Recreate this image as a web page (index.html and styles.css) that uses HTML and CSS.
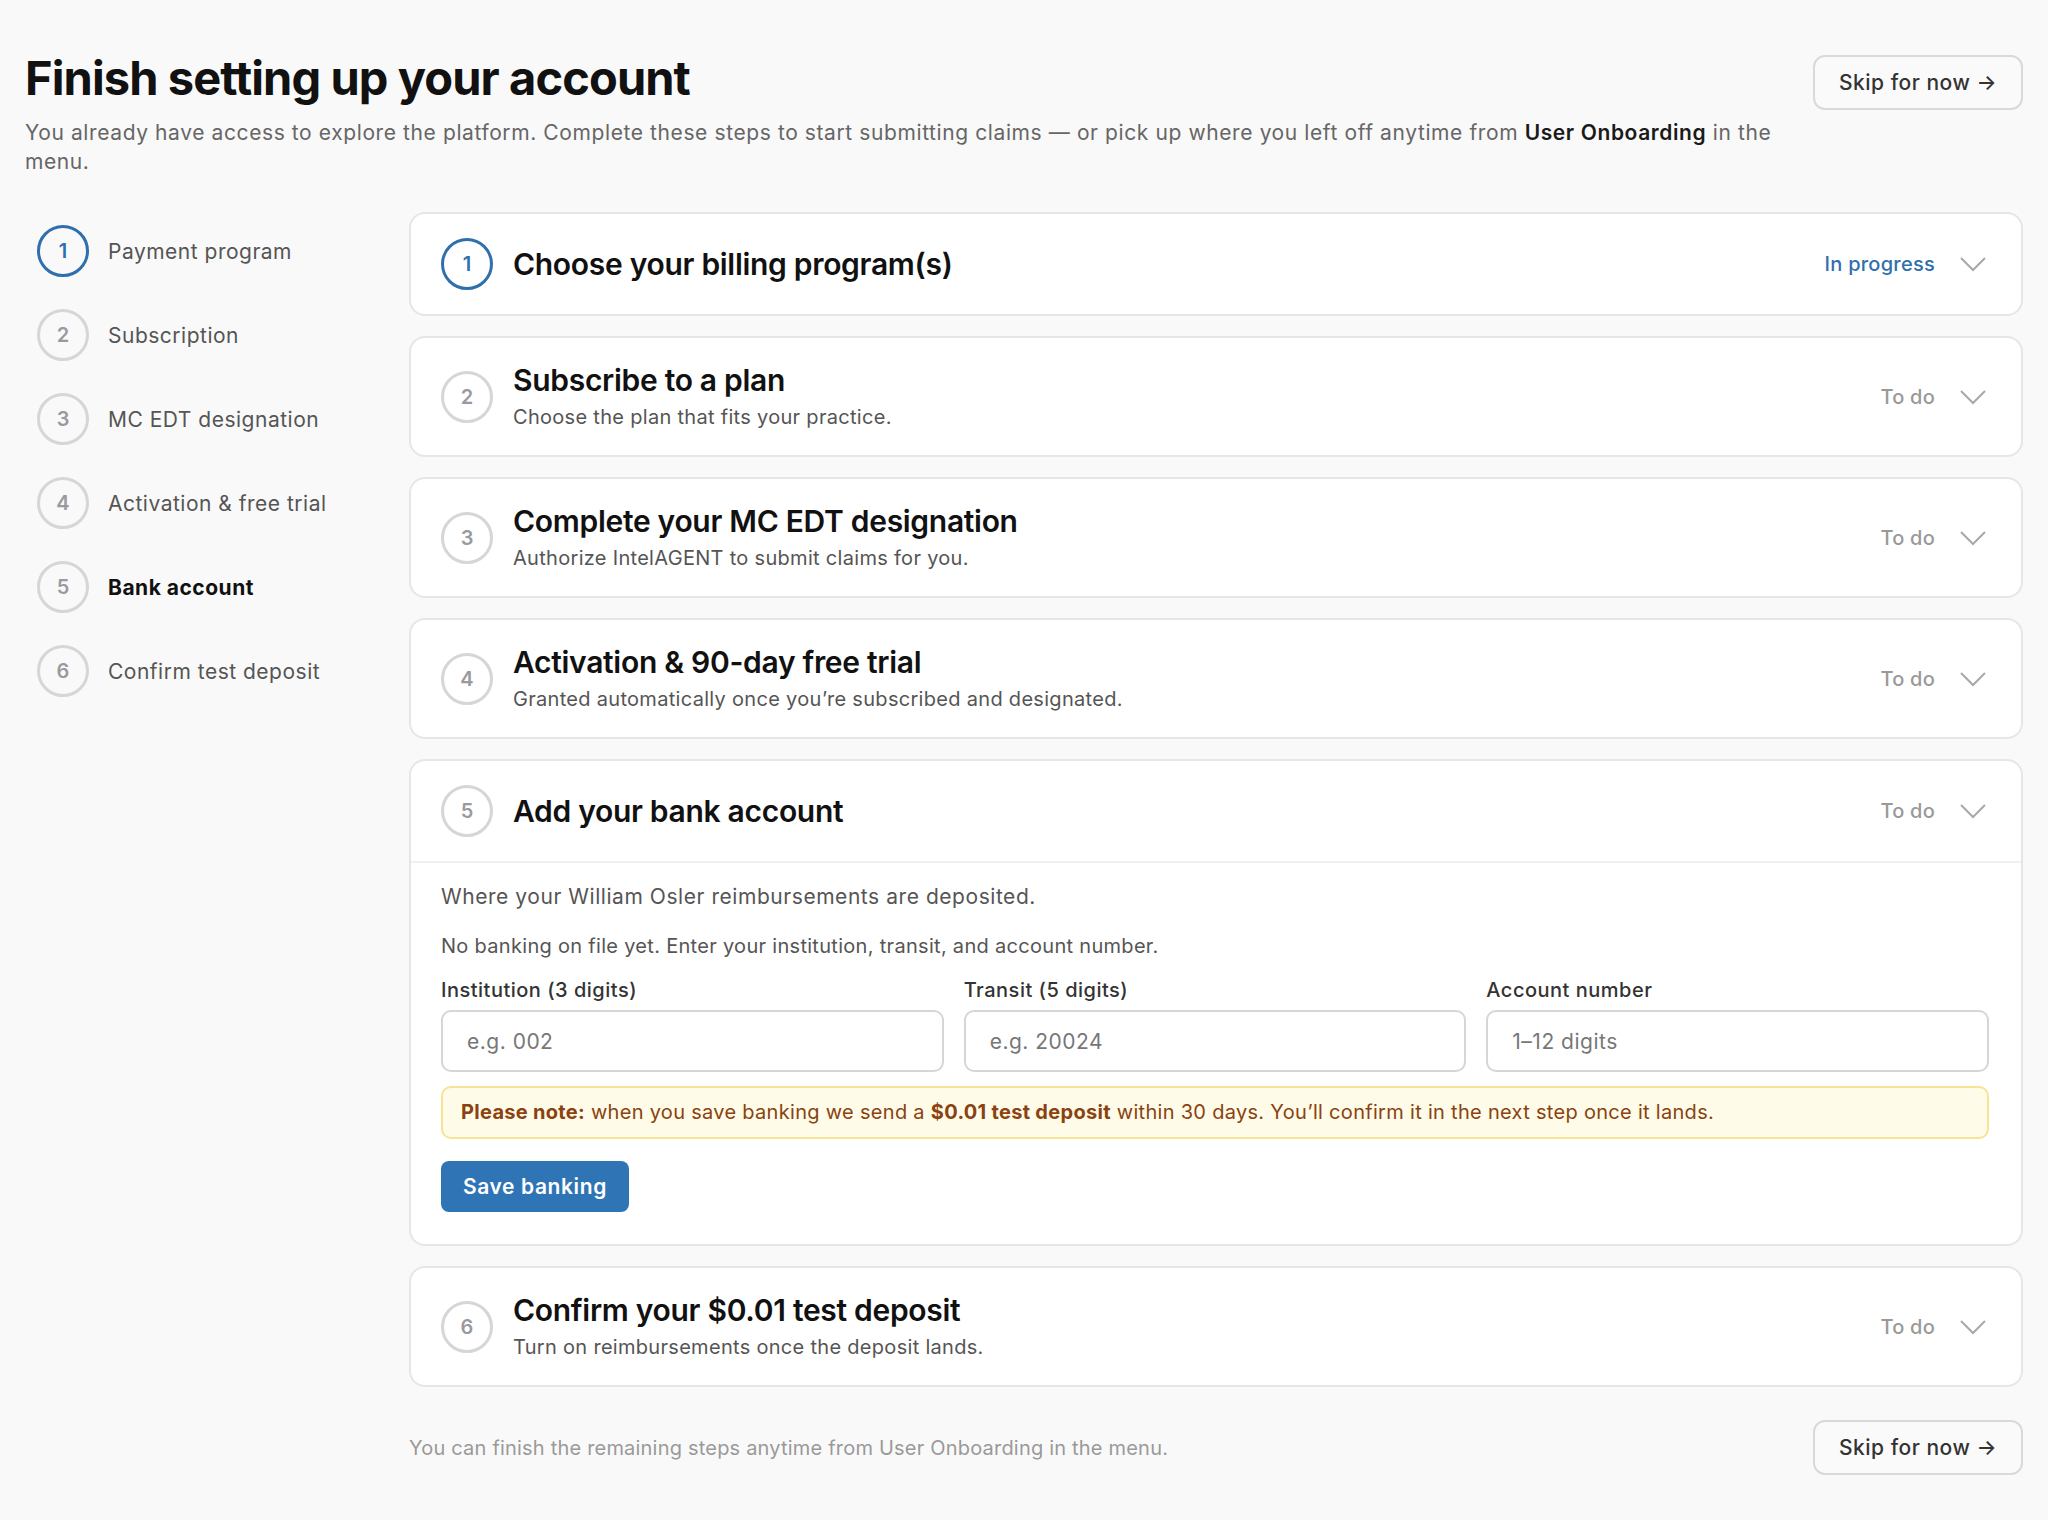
FILE: index.html
```html
<!DOCTYPE html>
<html lang="en">
<head>
<meta charset="UTF-8">
<meta name="viewport" content="width=device-width, initial-scale=1.0">
<title>Finish setting up your account</title>
<link rel="stylesheet" href="styles.css">
</head>
<body>

<div class="page">
  <header class="page-header">
    <div class="intro">
      <h1>Finish setting up your account</h1>
      <p>You already have access to explore the platform. Complete these steps to start submitting claims — or pick up where you left off anytime from <strong>User Onboarding</strong> in the <span>menu.</span></p>
    </div>
    <button class="skip-btn">Skip for now →</button>
  </header>

  <div class="layout">
    <nav class="steps-nav">
      <div class="nav-item"><span class="num active">1</span><span class="nav-label">Payment program</span></div>
      <div class="nav-item"><span class="num">2</span><span class="nav-label">Subscription</span></div>
      <div class="nav-item"><span class="num">3</span><span class="nav-label">MC EDT designation</span></div>
      <div class="nav-item"><span class="num">4</span><span class="nav-label">Activation &amp; free trial</span></div>
      <div class="nav-item current"><span class="num">5</span><span class="nav-label">Bank account</span></div>
      <div class="nav-item"><span class="num">6</span><span class="nav-label">Confirm test deposit</span></div>
    </nav>

    <main class="steps">
      <section class="card">
        <div class="card-head">
          <span class="num active">1</span>
          <div class="card-title">
            <h2>Choose your billing program(s)</h2>
          </div>
          <span class="status progress">In progress</span>
          <svg class="chevron" viewBox="0 0 28 28"><path d="M2 8l12 12 12-12"/></svg>
        </div>
      </section>

      <section class="card">
        <div class="card-head">
          <span class="num">2</span>
          <div class="card-title">
            <h2>Subscribe to a plan</h2>
            <p>Choose the plan that fits your practice.</p>
          </div>
          <span class="status">To do</span>
          <svg class="chevron" viewBox="0 0 28 28"><path d="M2 8l12 12 12-12"/></svg>
        </div>
      </section>

      <section class="card">
        <div class="card-head">
          <span class="num">3</span>
          <div class="card-title">
            <h2>Complete your MC EDT designation</h2>
            <p>Authorize IntelAGENT to submit claims for you.</p>
          </div>
          <span class="status">To do</span>
          <svg class="chevron" viewBox="0 0 28 28"><path d="M2 8l12 12 12-12"/></svg>
        </div>
      </section>

      <section class="card">
        <div class="card-head">
          <span class="num">4</span>
          <div class="card-title">
            <h2>Activation &amp; 90-day free trial</h2>
            <p>Granted automatically once you’re subscribed and designated.</p>
          </div>
          <span class="status">To do</span>
          <svg class="chevron" viewBox="0 0 28 28"><path d="M2 8l12 12 12-12"/></svg>
        </div>
      </section>

      <section class="card open">
        <div class="card-head">
          <span class="num">5</span>
          <div class="card-title">
            <h2>Add your bank account</h2>
          </div>
          <span class="status">To do</span>
          <svg class="chevron" viewBox="0 0 28 28"><path d="M2 8l12 12 12-12"/></svg>
        </div>
        <div class="card-body">
          <p class="lead">Where your William Osler reimbursements are deposited.</p>
          <p class="hint">No banking on file yet. Enter your institution, transit, and account number.</p>
          <div class="fields">
            <div class="field">
              <label for="inst">Institution (3 digits)</label>
              <input type="text" id="inst" placeholder="e.g. 002">
            </div>
            <div class="field">
              <label for="transit">Transit (5 digits)</label>
              <input type="text" id="transit" placeholder="e.g. 20024">
            </div>
            <div class="field">
              <label for="acct">Account number</label>
              <input type="text" id="acct" placeholder="1–12 digits">
            </div>
          </div>
          <div class="note"><strong>Please note:</strong> when you save banking we send a <strong>$0.01 test deposit</strong> within 30 days. You’ll confirm it in the next step once it lands.</div>
          <button class="save-btn">Save banking</button>
        </div>
      </section>

      <section class="card">
        <div class="card-head">
          <span class="num">6</span>
          <div class="card-title">
            <h2>Confirm your $0.01 test deposit</h2>
            <p>Turn on reimbursements once the deposit lands.</p>
          </div>
          <span class="status">To do</span>
          <svg class="chevron" viewBox="0 0 28 28"><path d="M2 8l12 12 12-12"/></svg>
        </div>
      </section>

      <footer class="page-footer">
        <span>You can finish the remaining steps anytime from User Onboarding in the menu.</span>
        <button class="skip-btn">Skip for now →</button>
      </footer>
    </main>
  </div>
</div>

</body>
</html>
```

FILE: styles.css
```css
/* Onboarding checklist */
body, html {
  margin: 0;
  padding: 0;
  font-family: Inter, "Liberation Sans", sans-serif;
  background-color: #f9f9f9;
  color: #111;
}
.page {
  padding: 48px 25px 40px;
}
.page-header {
  display: flex;
  justify-content: space-between;
  align-items: flex-start;
  gap: 40px;
}
.intro h1 {
  margin: 0;
  font-size: 47px;
  line-height: 60px;
  font-weight: 700;
  letter-spacing: -0.9px;
}
.intro p {
  margin: 10px 0 0;
  font-size: 21px;
  line-height: 29px;
  letter-spacing: 0.6px;
  color: #666;
}
.intro p strong {
  color: #1a1a1a;
  font-weight: 600;
}
.skip-btn {
  flex-shrink: 0;
  width: 210px;
  height: 55px;
  margin-top: 7px;
  background: #fafafa;
  border: 2px solid #d9d9d9;
  border-radius: 12px;
  font-family: inherit;
  font-size: 21px;
  font-weight: 500;
  letter-spacing: 0.5px;
  color: #333;
}

/* two columns */
.layout {
  display: grid;
  grid-template-columns: 384px 1fr;
  margin-top: 36px;
}
.steps-nav {
  display: flex;
  flex-direction: column;
  gap: 32px;
  padding: 13px 0 0 12px;
}
.nav-item {
  display: flex;
  align-items: center;
  gap: 19px;
}
.nav-label {
  font-size: 21px;
  letter-spacing: 0.5px;
  color: #555;
}
.nav-item.current .nav-label {
  color: #111;
  font-weight: 700;
}
.num {
  flex-shrink: 0;
  box-sizing: border-box;
  width: 52px;
  height: 52px;
  border: 3px solid #d6d6d8;
  border-radius: 50%;
  display: flex;
  align-items: center;
  justify-content: center;
  font-size: 20px;
  font-weight: 600;
  color: #9a9a9e;
  background: #fff;
}
.steps-nav .num {
  background: transparent;
}
.num.active {
  border-color: #2f6fad;
  color: #2f6fad;
}

/* cards */
.steps {
  display: flex;
  flex-direction: column;
  gap: 20px;
}
.card {
  background: #fff;
  border: 2px solid #e6e6e6;
  border-radius: 16px;
}
.card-head {
  display: flex;
  align-items: center;
  padding: 24px 34px 24px 30px;
}
.card-title {
  flex: 1;
  margin-left: 20px;
}
.card-title h2 {
  margin: 0;
  font-size: 30px;
  line-height: 36px;
  font-weight: 600;
  letter-spacing: -0.3px;
}
.card-title p {
  margin: 6px 0 0;
  font-size: 20px;
  line-height: 27px;
  letter-spacing: 0.3px;
  color: #555;
}
.status {
  font-size: 20px;
  font-weight: 500;
  letter-spacing: 0.25px;
  color: #999;
}
.status.progress {
  color: #2f6fad;
}
.chevron {
  width: 28px;
  height: 28px;
  margin-left: 24px;
  fill: none;
  stroke: #a8a8ac;
  stroke-width: 2;
}
.card.open .card-head {
  border-bottom: 2px solid #f0f0f0;
}
.card-body {
  padding: 20px 32px 32px 30px;
}
.lead {
  margin: 0;
  font-size: 21px;
  line-height: 28px;
  letter-spacing: 0.55px;
  color: #555;
}
.hint {
  margin: 22px 0 0;
  font-size: 20px;
  line-height: 26px;
  letter-spacing: 0.3px;
  color: #555;
}
.fields {
  display: grid;
  grid-template-columns: 1fr 1fr 1fr;
  gap: 20px;
  margin-top: 18px;
}
.field label {
  display: block;
  font-size: 20px;
  line-height: 26px;
  font-weight: 500;
  letter-spacing: 0.5px;
  color: #333;
  margin-bottom: 7px;
}
.field input {
  box-sizing: border-box;
  width: 100%;
  height: 62px;
  padding: 0 24px;
  border: 2px solid #d6d6d6;
  border-radius: 10px;
  font-family: inherit;
  font-size: 21px;
  letter-spacing: 0.5px;
  outline: none;
}
.field input::placeholder {
  color: #777;
}
.note {
  margin-top: 14px;
  padding: 12px 18px;
  background: #fefbe8;
  border: 2px solid #f7e394;
  border-radius: 10px;
  font-size: 20px;
  line-height: 25px;
  letter-spacing: 0.3px;
  color: #8a4210;
}
.note strong {
  font-weight: 700;
}
.save-btn {
  margin-top: 22px;
  height: 51px;
  padding: 0 22px;
  background: #2f74b5;
  color: #fff;
  border: none;
  border-radius: 8px;
  font-family: inherit;
  font-size: 21px;
  font-weight: 600;
  letter-spacing: 0.6px;
}

.page-footer {
  display: flex;
  justify-content: space-between;
  align-items: center;
  margin-top: 13px;
  font-size: 20px;
  letter-spacing: 0.2px;
  color: #999;
}
.page-footer .skip-btn {
  margin-top: 0;
}
```
